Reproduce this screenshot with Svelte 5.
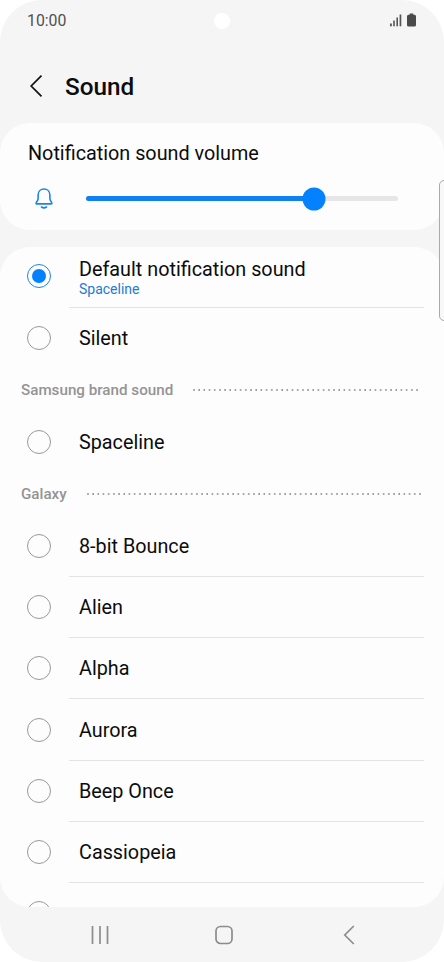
<script>
  let selected = 'default';
  let volume = 73.2;

  const groups = [
    {
      title: '',
      sounds: [
        { id: 'default', name: 'Default notification sound', detail: 'Spaceline' },
        { id: 'silent', name: 'Silent' }
      ]
    },
    { title: 'Samsung brand sound', sounds: [{ id: 'spaceline', name: 'Spaceline' }] },
    {
      title: 'Galaxy',
      sounds: [
        { id: 'bounce', name: '8-bit Bounce' },
        { id: 'alien', name: 'Alien' },
        { id: 'alpha', name: 'Alpha' },
        { id: 'aurora', name: 'Aurora' },
        { id: 'beep', name: 'Beep Once' },
        { id: 'cassiopeia', name: 'Cassiopeia' },
        { id: 'chime', name: 'Chime' }
      ]
    }
  ];
</script>

<div class="phone">
  <div class="status-bar">
    <span class="time">10:00</span>
    <span class="camera"></span>
    <div class="status-icons">
      <svg width="12" height="13" viewBox="0 0 12 13" fill="#555">
        <rect x="0" y="9.5" width="1.8" height="2.8" />
        <rect x="3.2" y="6.5" width="1.6" height="5.8" />
        <rect x="6.4" y="3.5" width="1.6" height="8.8" />
        <rect x="9.6" y="0.5" width="1.7" height="11.8" />
      </svg>
      <svg width="9" height="14" viewBox="0 0 9 14" fill="#4a4a4a">
        <path d="M2.7 .5h3.6v1.2h1.2Q9 1.7 9 3.2v8.8q0 1.5-1.5 1.5h-6Q0 13.5 0 12V3.2Q0 1.7 1.5 1.7h1.2z" />
      </svg>
    </div>
  </div>

  <header>
    <button class="back" aria-label="Back">
      <svg width="14" height="24" viewBox="0 0 14 24" fill="none" stroke="#111" stroke-width="1.7">
        <path d="M12.5 1.7 2.2 12l10.3 10.3" />
      </svg>
    </button>
    <h1>Sound</h1>
  </header>

  <section class="card volume-card">
    <h2>Notification sound volume</h2>
    <div class="volume-row">
      <svg width="18" height="21" viewBox="0 0 18 21" fill="none" stroke="#1c83ea" stroke-width="1.6" stroke-linejoin="round" stroke-linecap="round">
        <path d="M9 1C5.5 1 3.1 3.5 3.1 7v3.7c0 1.3-.6 2-1.4 3.2-.8 1.2-.9 2 .1 2h14.4c1 0 .9-.8.1-2-.8-1.2-1.4-1.9-1.4-3.2V7C14.9 3.5 12.5 1 9 1z" />
        <path d="M6.5 19c1.4 1 3.6 1 5 0" />
      </svg>
      <div class="slider">
        <div class="fill" style="width: {volume}%"></div>
        <div class="thumb" style="left: {volume}%"></div>
      </div>
    </div>
  </section>

  <section class="card sound-list">
    {#each groups as group}
      {#if group.title}
        <div class="group-title">
          <span>{group.title}</span>
          <i class="dots"></i>
        </div>
      {/if}
      {#each group.sounds as sound, i}
        <button class="sound" class:detailed={sound.detail} on:click={() => (selected = sound.id)}>
          <span class="radio" class:checked={selected === sound.id}></span>
          <span class="label" class:divided={i < group.sounds.length - 1}>
            <span class="name">{sound.name}</span>
            {#if sound.detail}
              <span class="detail">{sound.detail}</span>
            {/if}
          </span>
        </button>
      {/each}
    {/each}
  </section>

  <nav>
    <svg width="18" height="20" viewBox="0 0 18 20" stroke="#8c8c8c" stroke-width="1.7">
      <path d="M1.5 1v18M9 1v18M16.5 1v18" />
    </svg>
    <svg width="18" height="20" viewBox="0 0 18 20" fill="none" stroke="#8c8c8c" stroke-width="1.7">
      <rect x="1" y="1.5" width="16" height="17" rx="4.5" />
    </svg>
    <svg width="12" height="20" viewBox="0 0 12 20" fill="none" stroke="#8c8c8c" stroke-width="1.7">
      <path d="M10.8 1 1.8 10l9 9" />
    </svg>
  </nav>

  <div class="edge-panel"></div>
</div>

<style>
  :global(body) {
    background: #fff;
  }

  .phone {
    position: relative;
    box-sizing: border-box;
    display: flex;
    flex-direction: column;
    width: 444px;
    height: 962px;
    overflow: hidden;
    border-radius: 42px;
    background: #f5f5f5;
    color: #0c0c0c;
    font-family: Roboto, sans-serif;
  }

  button {
    padding: 0;
    border: 0;
    background: none;
    color: inherit;
    font: inherit;
    text-align: left;
    cursor: pointer;
  }

  svg {
    display: block;
    flex-shrink: 0;
  }

  .status-bar {
    display: grid;
    grid-template-columns: 1fr 16px 1fr;
    align-items: center;
    height: 41px;
    padding: 0 28px 0 27px;
  }

  .time {
    color: #505050;
    font-size: 15.8px;
    line-height: 20px;
  }

  .camera {
    width: 16px;
    height: 16px;
    border-radius: 50%;
    background: #fff;
  }

  .status-icons {
    display: flex;
    justify-content: flex-end;
    align-items: center;
    gap: 5px;
    padding-bottom: 1px;
  }

  header {
    box-sizing: border-box;
    display: flex;
    align-items: center;
    gap: 22px;
    height: 82px;
    padding: 10px 29px 0;
  }

  h1 {
    margin: 0;
    font-size: 24.3px;
    font-weight: 500;
    line-height: 30px;
  }

  .back {
    padding-bottom: 2px;
  }

  .card {
    border-radius: 30px;
    background: #fdfdfd;
  }

  .volume-card {
    box-sizing: border-box;
    height: 107px;
    padding: 19px 46px 0 28px;
  }

  h2 {
    margin: 0;
    font-size: 19.8px;
    font-weight: 400;
    line-height: 24px;
  }

  .volume-row {
    display: flex;
    align-items: center;
    gap: 33px;
    margin-top: 22px;
    padding-left: 7px;
  }

  .slider {
    position: relative;
    flex: 1;
    height: 5px;
    border-radius: 3px;
    background: #e6e6e6;
  }

  .fill {
    height: 100%;
    border-radius: 3px;
    background: #0f80f2;
  }

  .thumb {
    position: absolute;
    top: 50%;
    width: 23px;
    height: 23px;
    border-radius: 50%;
    background: #0381fe;
    transform: translate(-50%, -50%);
  }

  .sound-list {
    height: 660px;
    margin-top: 16.5px;
    overflow: hidden;
  }

  .sound {
    display: flex;
    align-items: center;
    width: 100%;
    height: 61.3px;
    padding: 0 20px 0 27px;
  }

  .sound.detailed {
    height: 61px;
  }

  .radio {
    display: flex;
    align-items: center;
    justify-content: center;
    box-sizing: border-box;
    width: 24px;
    height: 24px;
    margin: 0 18px 1px 0;
    border: 1.5px solid #999;
    border-radius: 50%;
    flex-shrink: 0;
  }

  .radio.checked {
    border-color: #1c83ea;
  }

  .radio.checked::before {
    content: '';
    width: 14px;
    height: 14px;
    border-radius: 50%;
    background: #0381fe;
  }

  .detailed .radio {
    margin-bottom: 2px;
  }

  .label {
    display: flex;
    flex: 1;
    flex-direction: column;
    justify-content: center;
    box-sizing: border-box;
    height: 100%;
    padding: 2px 0 0 10px;
    border-bottom: 1px solid transparent;
  }

  .label.divided {
    border-bottom-color: #e4e4e4;
  }

  .sound:last-child .label {
    padding-top: 4.5px;
  }

  .name {
    font-size: 19.8px;
    line-height: 24px;
  }

  .detail {
    color: #1c7bd6;
    font-size: 14px;
    line-height: 15px;
  }

  .group-title {
    display: flex;
    align-items: center;
    gap: 20px;
    height: 42.7px;
    padding: 0 23px 0 21px;
    color: #949494;
    font-size: 15.2px;
    font-weight: 500;
  }

  .dots {
    flex: 1;
    height: 2px;
    margin-bottom: 1px;
    background: radial-gradient(circle at 1px 1px, #8c8c8c 0.5px, transparent 1.2px) 0 0 / 5.2px 2px repeat-x;
  }

  nav {
    display: flex;
    align-items: center;
    flex: 1;
    gap: 106px;
    padding: 2px 0 0 91px;
  }

  nav svg:last-child {
    margin-left: 4px;
  }

  .edge-panel {
    position: absolute;
    top: 180px;
    right: -6px;
    box-sizing: border-box;
    width: 11px;
    height: 141px;
    border: 1px solid #aaa;
    border-radius: 5px;
    background: #f8f8f8;
  }
</style>
